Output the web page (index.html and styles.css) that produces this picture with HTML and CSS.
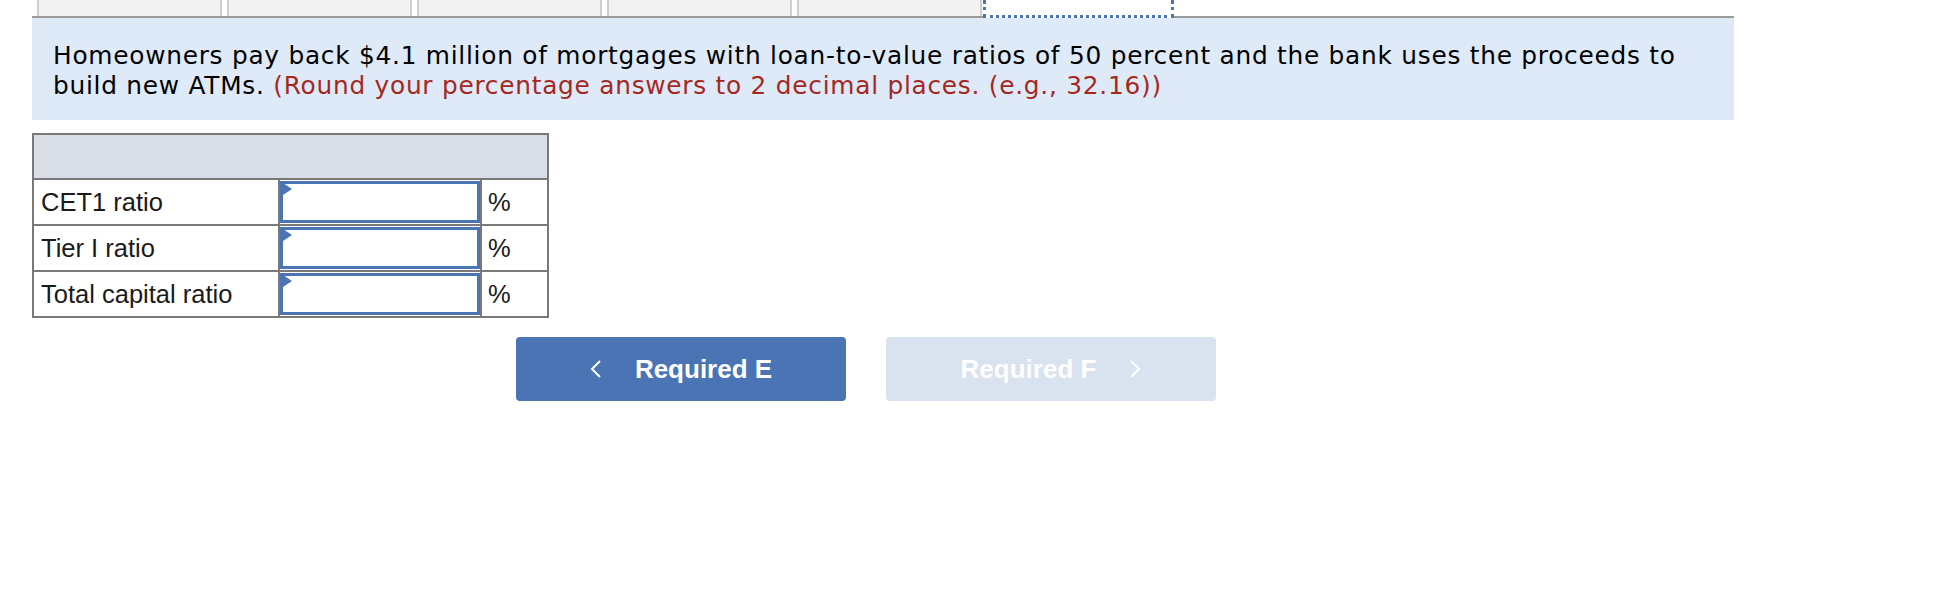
FILE: index.html
```html
<!DOCTYPE html>
<html lang="en">

<head>
    <meta charset="UTF-8">
    <title>Required F</title>
    <link rel="stylesheet" href="styles.css">
</head>

<body>
    <div class="tabs">
        <div class="tab"></div>
        <div class="tab"></div>
        <div class="tab"></div>
        <div class="tab"></div>
        <div class="tab"></div>
        <div class="tab active"></div>
    </div>

    <div class="question">
        <p>Homeowners pay back $4.1 million of mortgages with loan-to-value ratios of 50 percent and the bank uses the proceeds to build new ATMs. <span class="hint">(Round your percentage answers to 2 decimal places. (e.g., 32.16))</span></p>
    </div>

    <table class="answers">
        <tr>
            <th colspan="3"></th>
        </tr>
        <tr>
            <td class="label">CET1 ratio</td>
            <td class="entry"><span class="field"><input type="text"></span></td>
            <td class="unit">%</td>
        </tr>
        <tr>
            <td class="label">Tier I ratio</td>
            <td class="entry"><span class="field"><input type="text"></span></td>
            <td class="unit">%</td>
        </tr>
        <tr>
            <td class="label">Total capital ratio</td>
            <td class="entry"><span class="field"><input type="text"></span></td>
            <td class="unit">%</td>
        </tr>
    </table>

    <div class="nav">
        <button class="nav-btn prev">
            <svg width="12" height="18" viewBox="0 0 12 18"><polyline points="10,1 2,9 10,17" fill="none" stroke="#fff" stroke-width="2"/></svg>
            Required E
        </button>
        <button class="nav-btn next" disabled>
            Required F
            <svg width="12" height="18" viewBox="0 0 12 18"><polyline points="2,1 10,9 2,17" fill="none" stroke="#fff" stroke-width="2"/></svg>
        </button>
    </div>
</body>

</html>
```

FILE: styles.css
```css
:root {
    --panel-blue: #deeaf7;
    --line-grey: #9a9a9a;
    --cell-border: #797979;
    --accent: #4a74b3;
    --accent-light: #d9e2ef;
    --hint-red: #a5281f;
}

body {
    margin: 0;
    font-family: "Liberation Sans", Arial, sans-serif;
    color: #1a1a1a;
    background: #fff;
}

.tabs {
    display: flex;
    gap: 5px;
    width: 1697px;
    height: 16px;
    margin-left: 32px;
    padding-left: 5px;
    border-bottom: 2px solid var(--line-grey);
}

.tab {
    width: 185px;
    background: #f2f2f2;
    border-left: 2px solid #cfcfcf;
    border-right: 2px solid #cfcfcf;
    box-sizing: border-box;
}

.tab.active {
    width: 191px;
    height: 18px;
    margin-left: -4px;
    background: #fff;
    border: 3px dotted var(--accent);
    border-top: none;
}

.question {
    width: 1702px;
    margin-left: 32px;
    padding: 23px 21px 19px;
    box-sizing: border-box;
    background: var(--panel-blue);
}

.question p {
    margin: 0;
    font-family: "DejaVu Sans", Verdana, sans-serif;
    font-size: 24.8px;
    letter-spacing: 0.75px;
    line-height: 30px;
    color: #000;
}

.hint {
    color: var(--hint-red);
}

.answers {
    margin: 13px 0 0 32px;
    border-collapse: collapse;
    font-size: 25.5px;
}

.answers th {
    height: 43px;
    padding: 0;
    background: #d8dde6;
    border: 2px solid var(--cell-border);
}

.answers td {
    height: 42px;
    padding: 0;
    border: 2px solid var(--cell-border);
    background: #fff;
}

.answers .label {
    width: 237px;
    padding-left: 7px;
}

.answers .entry {
    width: 200px;
    padding: 1px 0;
}

.answers .unit {
    width: 59px;
    padding-left: 6px;
}

.field {
    position: relative;
    display: block;
    height: 42px;
}

.field::before {
    content: '';
    position: absolute;
    left: 3px;
    top: 2px;
    border-left: 9px solid var(--accent);
    border-top: 6px solid transparent;
    border-bottom: 6px solid transparent;
}

.field input {
    display: block;
    width: 100%;
    height: 100%;
    box-sizing: border-box;
    border: 3px solid var(--accent);
    margin: 0;
    padding: 0 8px;
    font-size: 22px;
    background: #fff;
}

.nav {
    display: flex;
    gap: 40px;
    margin: 19px 0 0 516px;
}

.nav-btn {
    display: flex;
    align-items: center;
    justify-content: center;
    gap: 33px;
    width: 330px;
    height: 64px;
    border: none;
    border-radius: 4px;
    font-family: "Liberation Sans", Arial, sans-serif;
    font-size: 26px;
    font-weight: bold;
    color: #fff;
    cursor: pointer;
}

.nav-btn.prev {
    background: var(--accent);
}

.nav-btn.next {
    background: var(--accent-light);
    cursor: default;
}
```
